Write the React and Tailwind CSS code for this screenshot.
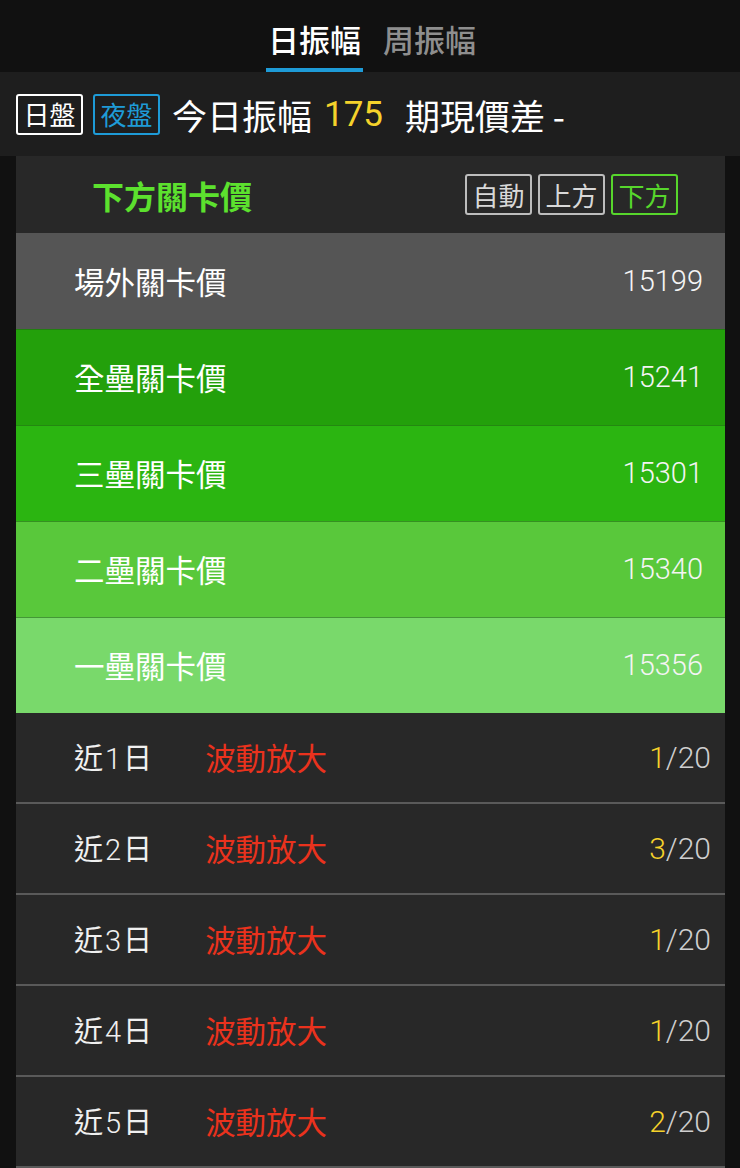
import React from "react";

const CJK = { fontFamily: '"Noto Sans CJK TC", "Noto Sans", sans-serif' };

const LEVELS = [
  { name: "場外關卡價", value: "15199", bg: "bg-[#555555]" },
  { name: "全壘關卡價", value: "15241", bg: "bg-[#23a00b]" },
  { name: "三壘關卡價", value: "15301", bg: "bg-[#2bb511]" },
  { name: "二壘關卡價", value: "15340", bg: "bg-[#59c83b]" },
  { name: "一壘關卡價", value: "15356", bg: "bg-[#79d96b]" },
];

const RECENT = [
  { day: "1", hits: "1" },
  { day: "2", hits: "3" },
  { day: "3", hits: "1" },
  { day: "4", hits: "1" },
  { day: "5", hits: "2" },
];

const Chip = ({ children, className }) => (
  <span className={`flex items-center justify-center h-[41px] w-[67px] rounded-[3px] border-2 text-[26px] leading-none ${className}`}>
    {children}
  </span>
);

export default function App() {
  return (
    <div className="w-[740px] h-[1168px] overflow-hidden bg-[#111111] text-white" style={CJK}>
      {/* Tabs */}
      <div className="h-[72px] flex justify-center items-end gap-[18px]">
        <div className="flex flex-col items-center">
          <span className="text-[31px] font-medium leading-none pb-[14px] px-[4px]">日振幅</span>
          <span className="block h-[4px] w-[97px] bg-[#1e9bd7]" />
        </div>
        <span className="text-[31px] font-medium leading-none pb-[18px] text-[#8e8e8e]">周振幅</span>
      </div>

      {/* Session bar */}
      <div className="h-[84px] bg-[#1e1e1e] flex items-center pl-[16px] gap-[10px]">
        <Chip className="border-white text-white">日盤</Chip>
        <Chip className="border-[#1e9bd7] text-[#1e9bd7]">夜盤</Chip>
        <div className="ml-[2px] flex items-center text-[35px] leading-none">
          <span>今日振幅</span>
          <span className="ml-[12px] text-[#f5d22b]" style={{ fontFamily: "Roboto, sans-serif" }}>175</span>
          <span className="ml-[22px]">期現價差 -</span>
        </div>
      </div>

      {/* Panel */}
      <div className="mx-[16px] w-[709px]">
        <div className="h-[77px] bg-[#282828] flex items-center justify-between pl-[76px] pr-[47px]">
          <span className="text-[32px] font-bold text-[#5ce12e] leading-none">下方關卡價</span>
          <div className="flex gap-[6px]">
            <Chip className="border-[#bdbdbd] text-[#d8d8d8]">自動</Chip>
            <Chip className="border-[#bdbdbd] text-[#d8d8d8]">上方</Chip>
            <Chip className="border-[#57d62c] text-[#57d62c]">下方</Chip>
          </div>
        </div>

        {LEVELS.map((l, i) => (
          <div
            key={l.name}
            className={`h-[96px] flex items-center justify-between pl-[58px] pr-[22px] ${l.bg} ${i > 0 ? "border-t border-[#1f6b12]/60" : ""}`}
          >
            <span className="text-[30.5px] leading-none">{l.name}</span>
            <span className="text-[29px] font-light leading-none text-[#f4f4f4]" style={{ fontFamily: "Roboto, sans-serif" }}>
              {l.value}
            </span>
          </div>
        ))}

        {RECENT.map((r) => (
          <div key={r.day} className="h-[91px] bg-[#282828] border-b-2 border-[#5a5a5a] flex items-center pl-[58px] pr-[14px]">
            <span className="text-[29px] leading-none text-[#f0f0f0]">
              近<span className="mx-[2px]" style={{ fontFamily: "Roboto, sans-serif", fontWeight: 300 }}>{r.day}</span>日
            </span>
            <span className="ml-[53px] text-[30.5px] leading-none text-[#ea321d]">波動放大</span>
            <span className="ml-auto text-[30px] font-light leading-none text-[#cfcfcf]" style={{ fontFamily: "Roboto, sans-serif" }}>
              <span className="text-[#f5d22b]">{r.hits}</span>/20
            </span>
          </div>
        ))}
      </div>
    </div>
  );
}
